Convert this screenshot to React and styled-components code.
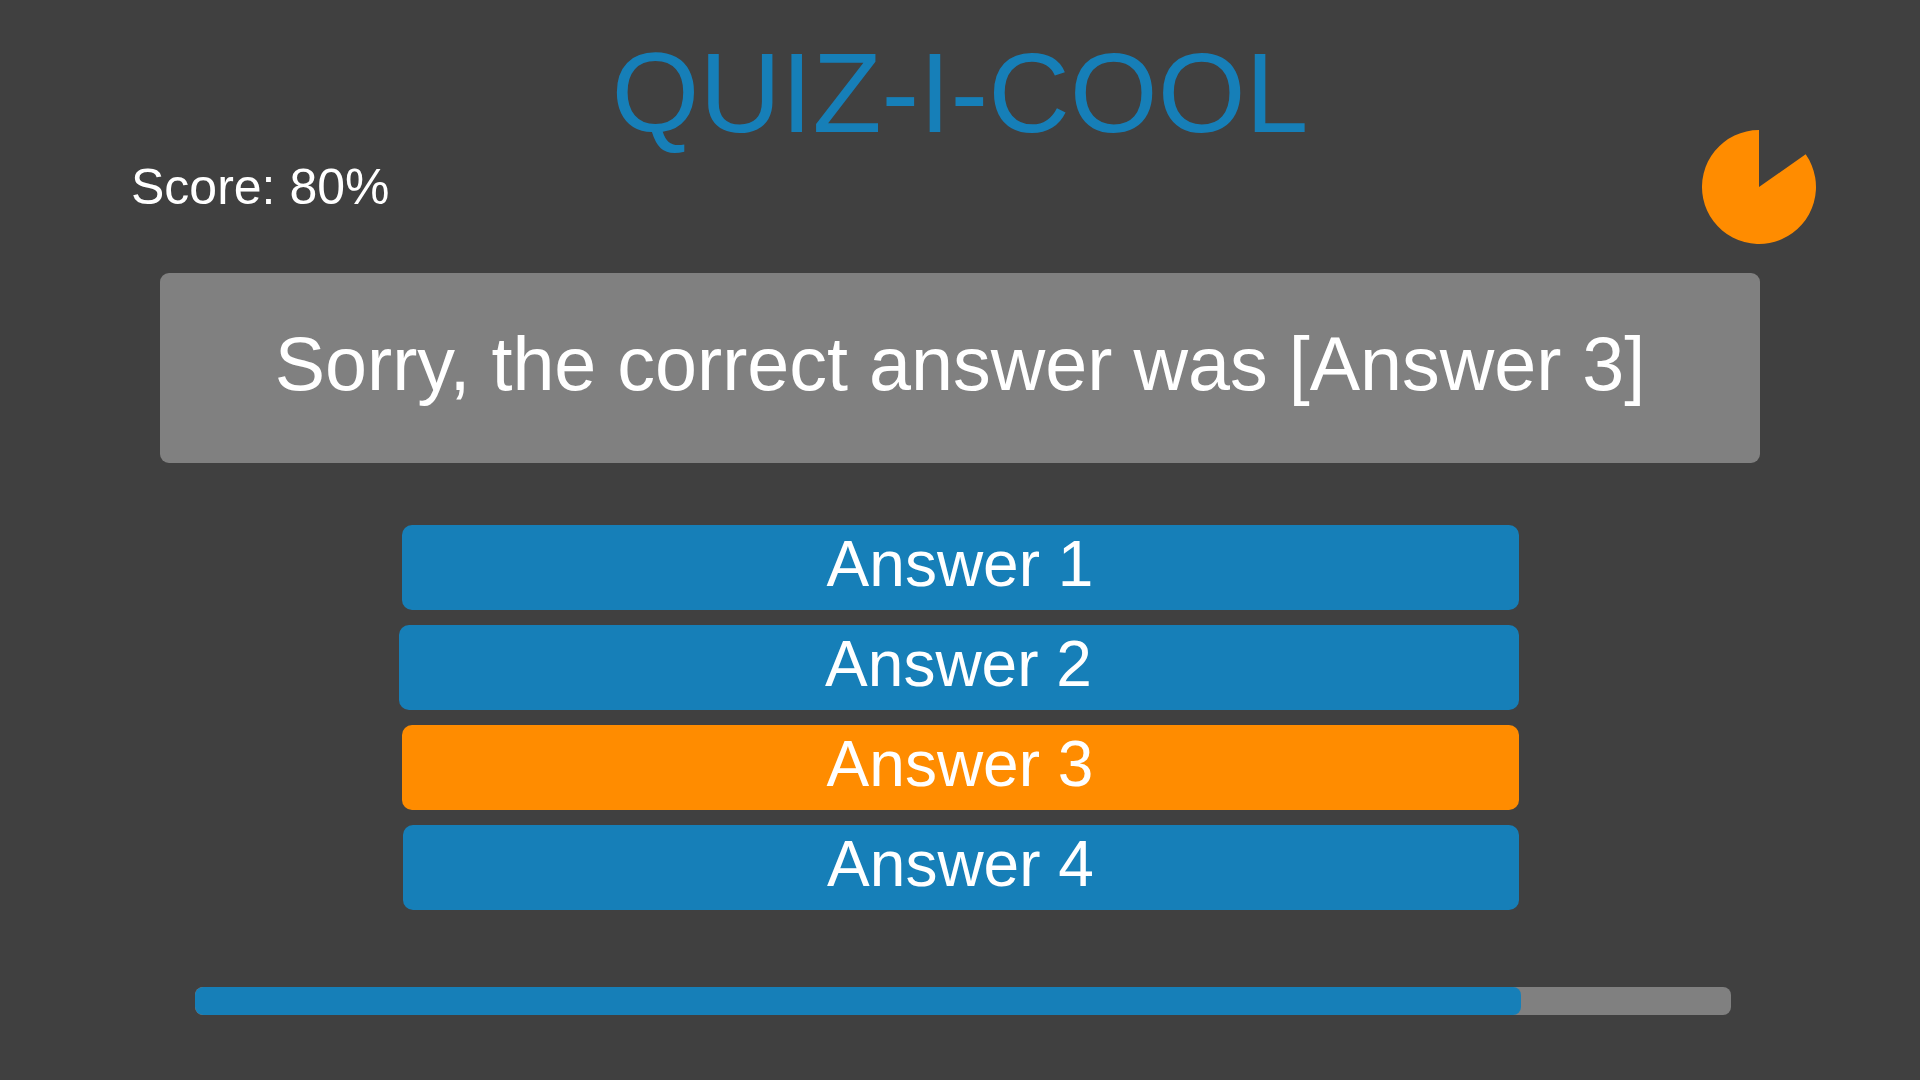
import React from 'react'
import styled, { createGlobalStyle } from 'styled-components'

const GlobalStyle = createGlobalStyle`
  html, body {
    margin: 0;
    padding: 0;
    background: #404040;
  }
  body {
    font-family: "Liberation Sans", Arial, Helvetica, sans-serif;
    color: #ffffff;
  }
`

const answers = [
  { label: 'Answer 1', correct: false, nudge: 0 },
  { label: 'Answer 2', correct: false, nudge: -3 },
  { label: 'Answer 3', correct: true, nudge: 0 },
  { label: 'Answer 4', correct: false, nudge: 1 },
]

const progress = 0.863

export default function App() {
  return (
    <Page>
      <GlobalStyle />
      <Title>QUIZ-I-COOL</Title>

      <StatusRow>
        <Score>Score: 80%</Score>
        <Timer viewBox="0 0 114 114">
          <path d="M57 57 L103.69 24.31 A57 57 0 1 1 57 0 Z" fill="#ff8c00" />
        </Timer>
      </StatusRow>

      <Feedback>Sorry, the correct answer was [Answer 3]</Feedback>

      <AnswerList>
        {answers.map((a) => (
          <AnswerButton key={a.label} $correct={a.correct} $nudge={a.nudge}>
            {a.label}
          </AnswerButton>
        ))}
      </AnswerList>

      <ProgressTrack>
        <ProgressFill style={{ width: `${progress * 100}%` }} />
      </ProgressTrack>
    </Page>
  )
}

// styles

const Page = styled.div`
  width: 1920px;
  height: 1080px;
  display: flex;
  flex-direction: column;
  overflow: hidden;
`

const Title = styled.h1`
  margin: 35px 0 0;
  height: 117px;
  font-size: 113px;
  line-height: 116px;
  font-weight: 400;
  color: #167fb8;
  text-align: center;
`

const StatusRow = styled.div`
  margin-top: -23px;
  display: flex;
  align-items: center;
  justify-content: space-between;
  padding: 0 104px 0 131px;
  height: 115px;
`

const Score = styled.div`
  font-size: 50px;
  line-height: 58px;
`

const Timer = styled.svg`
  width: 114px;
  height: 114px;
  display: block;
`

const Feedback = styled.div`
  margin: 29px 160px 0;
  height: 190px;
  box-sizing: border-box;
  padding-bottom: 8px;
  background: #808080;
  border-radius: 9px;
  display: flex;
  align-items: center;
  justify-content: center;
  font-size: 75.5px;
`

const AnswerList = styled.div`
  margin: 62px auto 0;
  width: 1117px;
  display: flex;
  flex-direction: column;
  gap: 15px;
`

const AnswerButton = styled.div`
  height: 85px;
  box-sizing: border-box;
  padding-bottom: 7px;
  margin-left: ${(p) => p.$nudge}px;
  border-radius: 10px;
  background: ${(p) => (p.$correct ? '#ff8c00' : '#167fb8')};
  display: flex;
  align-items: center;
  justify-content: center;
  font-size: 64px;
  line-height: 1;
`

const ProgressTrack = styled.div`
  margin: 77px 0 0 195px;
  width: 1536px;
  height: 28px;
  border-radius: 8px;
  background: #808080;
  overflow: hidden;
`

const ProgressFill = styled.div`
  height: 100%;
  border-radius: 8px;
  background: #167fb8;
`
